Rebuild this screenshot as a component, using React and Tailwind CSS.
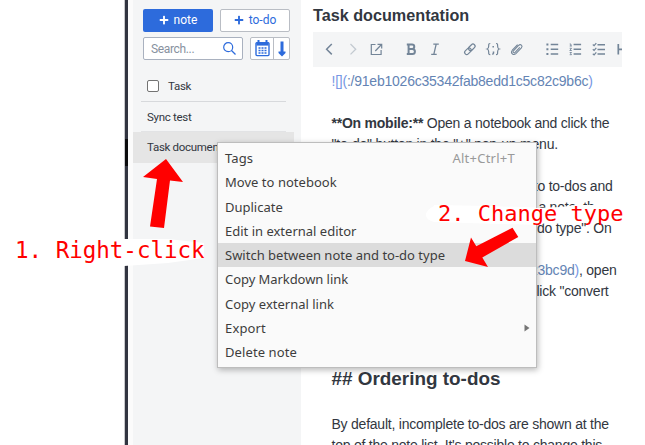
import React from 'react';
import { FaPlus } from 'react-icons/fa';

const menuItems = [
  { label: 'Tags', shortcut: 'Alt+Ctrl+T', spacing: 'tracking-[0.1px]' },
  { label: 'Move to notebook', spacing: 'tracking-[0.03px]' },
  { label: 'Duplicate', spacing: 'tracking-[0px]' },
  { label: 'Edit in external editor', spacing: 'tracking-[0px]' },
  { label: 'Switch between note and to-do type', spacing: 'tracking-[0px]', active: true },
  { label: 'Copy Markdown link', spacing: 'tracking-[-0.06px]' },
  { label: 'Copy external link', spacing: 'tracking-[0px]' },
  { label: 'Export', submenu: true, spacing: 'tracking-[0.15px]' },
  { label: 'Delete note', spacing: 'tracking-[0.1px]' },
];

function NoteList() {
  return (
    <aside className="w-[168px] shrink-0 bg-[#f4f5f6] font-['Roboto',sans-serif] text-[11.5px] tracking-[-0.3px] text-[#32373f]">
      <div className="flex flex-col gap-[5px] pl-[10px] pt-[9px]">
        <div className="flex gap-[7px] text-[12px] tracking-normal">
          <button className="flex h-[23px] w-[70px] items-center justify-center gap-[5px] rounded-[2px] bg-[#2d6bdc] pb-px text-white">
            <FaPlus size={10} /> note
          </button>
          <button className="flex h-[23px] w-[70px] items-center justify-center gap-[5px] rounded-[2px] border border-[#b9bdc4] bg-white pb-px text-[#2d6bdc]">
            <FaPlus size={10} /> to-do
          </button>
        </div>
        <div className="flex gap-[7px]">
          <div className="flex h-[23px] w-[100px] items-center justify-between rounded-[2px] border border-[#a9b1bf] bg-white pl-[7px] pr-[6px] text-[12px] tracking-[-0.35px] text-[#8791a0]">
            Search...
            <svg width="13" height="13" viewBox="0 0 13 13" fill="none" stroke="#2d6bdc" strokeWidth="1.2">
              <circle cx="5.2" cy="5.2" r="4.5" />
              <path d="M8.5 8.5 12.5 12.5" />
            </svg>
          </div>
          <div className="flex h-[23px] w-[40px] rounded-[2px] border border-[#b9bdc4] bg-white text-[#2d6bdc]">
            <div className="flex w-[23px] items-center justify-center border-r border-[#b9bdc4]">
              <svg width="15" height="17" viewBox="0 0 15 17" fill="none">
                <path d="M3.5 0v4M11.5 0v4" stroke="#2d6bdc" strokeWidth="2" />
                <path d="M1.5 2h12v3.6h-12z" fill="#2d6bdc" />
                <rect x="1" y="2.6" width="13" height="13" rx="1" stroke="#2d6bdc" strokeWidth="1.4" />
                <path d="M3.5 8h2M6.5 8h2M9.5 8h2M3.5 10.5h2M6.5 10.5h2M9.5 10.5h2M3.5 13h2M6.5 13h2M9.5 13h2" stroke="#2d6bdc" strokeWidth="1.5" />
              </svg>
            </div>
            <div className="flex flex-1 items-center justify-center">
              <svg width="8" height="16" viewBox="0 0 8 16" fill="#2d6bdc">
                <path d="M2.5 0.5h3v10H7.5V12L4 15.5 0.5 12v-1.5h2z" />
              </svg>
            </div>
          </div>
        </div>
      </div>
      <div className="mt-[11px] pl-2 pr-[15px]">
        <div className="flex h-[31px] items-center gap-[9px] border-b border-[#d7d9dc] pl-[6px]">
          <span className="size-[12px] rounded-[2px] border border-[#737373] bg-white" />
          <span className="pt-[2px]">Task</span>
        </div>
        <div className="flex h-[30px] items-center border-b border-[#e2e3e5] pl-[6px] pt-[2px]">Sync test</div>
      </div>
      <div className="mr-[7px] flex h-[31px] items-center whitespace-nowrap bg-[#e5e5e5] pl-[14px] pt-px">Task documentation</div>
    </aside>
  );
}

function ToolbarIcons() {
  return (
    <svg className="block" width="309" height="35" viewBox="313 32 309 35" fill="none" stroke="#738598" strokeWidth="1.2">
      <path d="M331.8 44 326.6 49.2 331.8 54.4" strokeWidth="1.5" />
      <path d="M350.5 44 355.7 49.2 350.5 54.4" stroke="#c3cad1" strokeWidth="1.3" />
      <path d="M375.5 44.5h-4.2v10h9.8v-4.6M377.5 44.3h4.2v4.2M381.5 44.5 375.3 51" />
      <path d="M406.8 44.6h5.2a2.2 2.2 0 0 1 0 4.5h-3.2 3.6a2.5 2.5 0 0 1 0 5h-5.6M408.6 44.6v9.4" strokeWidth="2" />
      <path d="M433.3 44.2h5.5M431.2 54.4h5.5M436.2 44.2l-2.4 10.2" strokeWidth="1.3" />
      <g transform="rotate(-45 470 49.3)">
        <rect x="463.4" y="47.1" width="7.5" height="4.2" rx="2.1" />
        <rect x="468.9" y="47.1" width="7.5" height="4.2" rx="2.1" />
      </g>
      <path d="M490.3 43.5c-1.8 0-1.6 1-1.6 2.5 0 2-.2 2.6-1.5 3 1.3.4 1.5 1 1.5 3 0 1.6-.2 2.6 1.6 2.6M496 43.5c1.8 0 1.6 1 1.6 2.5 0 2 .2 2.6 1.5 3-1.3.4-1.5 1-1.5 3 0 1.6.2 2.6-1.6 2.6" />
      <path d="M493.2 46v1.6M493.5 51.5v1.6l-1 1.5" strokeWidth="1.5" />
      <path transform="translate(-0.4 0)" strokeWidth="1.05" d="M513.6 51.2 519 45.4c1.9-1.9 4.6.3 2.8 2.5l-5.5 5.7c-2.5 2.4-5.8-.6-3.6-3.4l5.3-5.6M513.6 51.2c-.5 1.3.9 2.2 1.9 1.2l4.7-5" />
      <path d="M550.7 44.6h7.5M550.7 49.3h7.5M550.7 54h7.5" strokeWidth="1.5" />
      <path d="M546.4 44.6h2M546.4 49.3h2M546.4 54h2" strokeWidth="2" />
      <path d="M573.6 44.6h7.5M573.6 49.3h7.5M573.6 54h7.5" strokeWidth="1.5" />
      <path d="M569.7 44h1.2v2M569.7 46h2.2M569.7 48.3h1.8l-1.7 2.2h2M569.7 52.5h1.8l-.8 1 .8 1.2h-1.8" strokeWidth=".9" />
      <path d="M597.5 44.8h7.5M597.5 49.5h7.5M597.5 54h7.5" strokeWidth="1.5" />
      <path d="m592.8 44.5 1.3 1.2 2.2-2.6M592.8 49.2l1.3 1.2 2.2-2.6M592.8 53.8l1.3 1.2 2.2-2.6" />
      <path d="M618.3 44v10.5M618.3 49.3h6" strokeWidth="1.7" />
    </svg>
  );
}

function Editor() {
  return (
    <main className="min-w-0 flex-1 overflow-hidden bg-white pl-3 text-[#32373f]">
      <h1 className="h-8 pt-[3px] text-[16.2px] font-bold leading-[24px]">Task documentation</h1>
      <div className="h-[35px] w-[309px] overflow-hidden bg-[#f4f5f6]"><ToolbarIcons /></div>
      <div className="whitespace-nowrap pl-[18.5px] pt-[4px] text-[14px] leading-[21px] tracking-[-0.23px]">
        <p className="text-[#6484b4]"><span className="text-[#7697e4]">![](</span>:/91eb1026c35342fab8edd1c5c82c9b6c<span className="text-[#7697e4]">)</span></p>
        <p className="mt-[21px]"><b>**On mobile:**</b> Open a notebook and click the</p>
        <p>"to-do" button in the "+" pop-up menu.</p>
        <div className="mt-[21px] w-[281px] text-right">
          <p>to to-dos and</p>
          <p className="pr-[18px]">a note, th</p>
          <p className="pr-px">do type". On</p>
        </div>
        <div className="mt-[21px] w-[285px] text-right">
          <p><span className="text-[#6484b4]">23bc9d</span><span className="text-[#7697e4]">)</span>, open</p>
          <p className="pr-[8px]">click "convert</p>
        </div>
        <h2 className="mt-[64px] text-[18.9px] font-bold leading-[26px] tracking-normal">## Ordering to-dos</h2>
        <p className="mt-[22px]">By default, incomplete to-dos are shown at the</p>
        <p>top of the note list. It's possible to change this</p>
      </div>
    </main>
  );
}

function ContextMenu() {
  return (
    <div className="absolute left-[217px] top-[142px] h-[226px] w-[320px] border border-[#bdbdbd] bg-[#fafafa] pt-[3px] font-['Noto_Sans',sans-serif] text-[13px] text-[#3d3d3d] shadow-[1px_2px_6px_rgba(0,0,0,0.28)]">
      {menuItems.map((item) => (
        <div key={item.label} className={`flex h-[24.25px] items-center justify-between whitespace-nowrap pl-[7px] pt-[1.5px] ${item.active ? 'bg-[#dcdcdc]' : ''} ${item.submenu ? 'pr-[6px]' : 'pr-[21px]'}`}>
          <span className={item.spacing}>{item.label}</span>
          {item.shortcut && <span className="tracking-[0.25px] text-[#999999]">{item.shortcut}</span>}
          {item.submenu && <svg className="mb-[2px]" width="6" height="8" fill="#757575"><path d="M0.5 0.5 5.5 4 0.5 7.5z" /></svg>}
        </div>
      ))}
    </div>
  );
}

function Annotations() {
  return (
    <>
      <svg className="pointer-events-none absolute inset-0" width="645" height="445">
        <path d="M124 239h44l36 4v15l-36 5-44 3z" fill="white" />
        <path d="M434 205l56 1 45 1.5v.5l26-1 14-2h45v14l-20 2h-50l-10 4-106-3q-8-2-8-7t8-9z" fill="white" />
        <path d="M166 159 183 182 170 180.5 164 228 150 226.5 157 179 143 177z" fill="#ff0000" />
        <path d="M465 261 471 237.5 476.3 246.2 512.5 227.7 518.3 237 482.3 257.5 488 267z" fill="#ff0000" />
      </svg>
      <span className="absolute left-[15px] top-[236px] whitespace-pre font-['DejaVu_Sans_Mono',monospace] text-[22.5px] leading-[28px] text-[#ff0000]">1. Right-click</span>
      <span className="absolute left-[438px] top-[200px] whitespace-pre font-['DejaVu_Sans_Mono',monospace] text-[22px] leading-[28px] text-[#ff0000]">2. Change type</span>
    </>
  );
}

export default function App() {
  return (
    <div className="relative flex h-[445px] w-[645px] overflow-hidden bg-white font-['Liberation_Sans',Arial,sans-serif]">
      <div className="w-[124px] shrink-0 border-r border-[#c8c9cc] box-content" />
      <div className="w-[3px] shrink-0 bg-[#313440] pt-[139px]"><div className="h-[27px] bg-[#0b0b0d]" /></div>
      <div className="w-[5px] shrink-0 bg-[#fbfbfb]" />
      <NoteList />
      <Editor />
      <ContextMenu />
      <Annotations />
    </div>
  );
}
